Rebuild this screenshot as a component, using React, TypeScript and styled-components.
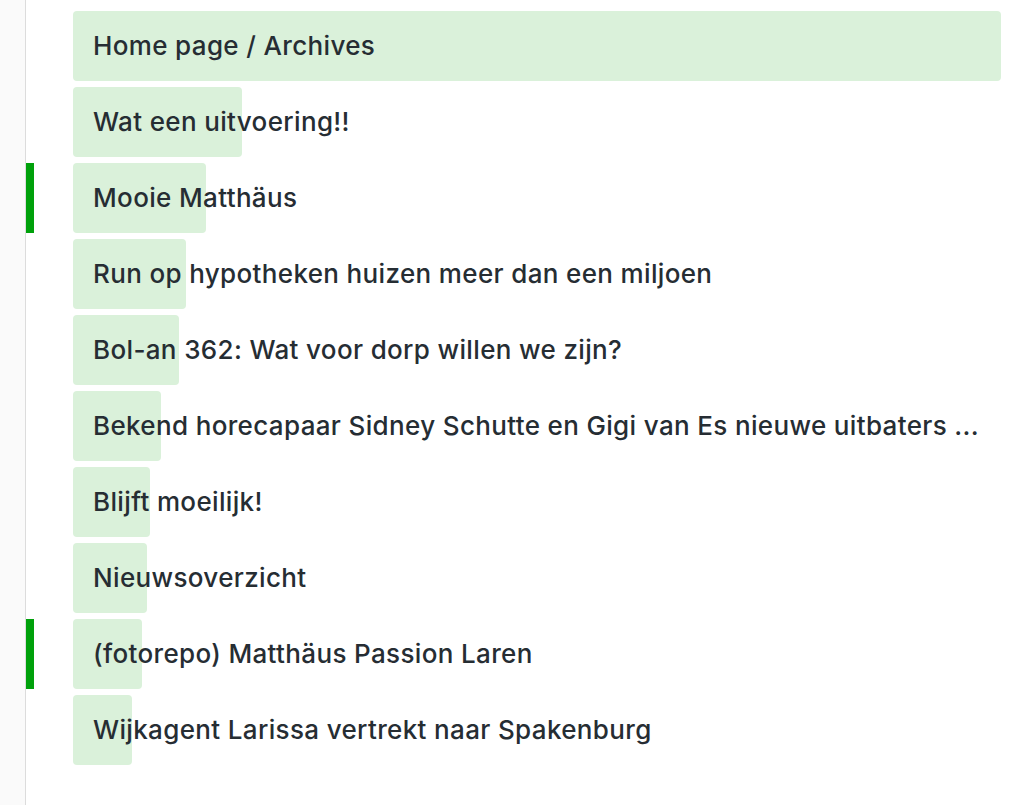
import styled, { createGlobalStyle } from "styled-components";

const GlobalStyle = createGlobalStyle`
    html, body {
        margin: 0;
        padding: 0;
        background: #ffffff;
        font-family: Inter, "Noto Sans", "Liberation Sans", sans-serif;
    }
`;

type Page = {
    title: string;
    views: number;
    live?: boolean;
};

// bar widths are relative to the first (largest) entry
const pages: Page[] = [
    { title: "Home page / Archives", views: 928 },
    { title: "Wat een uitvoering!!", views: 169 },
    { title: "Mooie Matthäus", views: 133, live: true },
    { title: "Run op hypotheken huizen meer dan een miljoen", views: 113 },
    { title: "Bol-an 362: Wat voor dorp willen we zijn?", views: 106 },
    { title: "Bekend horecapaar Sidney Schutte en Gigi van Es nieuwe uitbaters ...", views: 88 },
    { title: "Blijft moeilijk!", views: 77 },
    { title: "Nieuwsoverzicht", views: 74 },
    { title: "(fotorepo) Matthäus Passion Laren", views: 69, live: true },
    { title: "Wijkagent Larissa vertrekt naar Spakenburg", views: 59 },
];

const Layout = styled.div`
    display: flex;
    min-height: 805px;
`;

const Sidebar = styled.div`
    width: 25px;
    flex-shrink: 0;
    background: #fafafa;
    border-right: 1px solid #dcdcdc;
`;

const List = styled.ul`
    flex: 1;
    list-style: none;
    margin: 0;
    padding: 11px 23px 0 0;
    display: flex;
    flex-direction: column;
    gap: 6px;
`;

const Row = styled.li`
    display: flex;
    align-items: stretch;
    height: 70px;
`;

const Marker = styled.span<{ $on?: boolean }>`
    width: 8px;
    flex-shrink: 0;
    margin-right: 39px;
    background: ${({ $on }) => ($on ? "#00a10b" : "transparent")};
`;

const Item = styled.div`
    position: relative;
    flex: 1;
    min-width: 0;
`;

const Bar = styled.div`
    position: absolute;
    top: 0;
    left: 0;
    bottom: 0;
    background: #daf1da;
    border-radius: 4px;
`;

const Title = styled.span`
    position: relative;
    display: block;
    padding-left: 20px;
    line-height: 70px;
    font-size: 26px;
    font-weight: 500;
    letter-spacing: 0.35px;
    color: #262d33;
    white-space: nowrap;
    overflow: hidden;
`;

export default function App() {
    const max = pages[0].views;
    return (
        <>
            <GlobalStyle />
            <Layout>
                <Sidebar />
                <List>
                    {pages.map((p) => (
                        <Row key={p.title}>
                            <Marker $on={p.live} />
                            <Item>
                                <Bar style={{ width: `${(p.views / max) * 100}%` }} />
                                <Title>{p.title}</Title>
                            </Item>
                        </Row>
                    ))}
                </List>
            </Layout>
        </>
    );
}
